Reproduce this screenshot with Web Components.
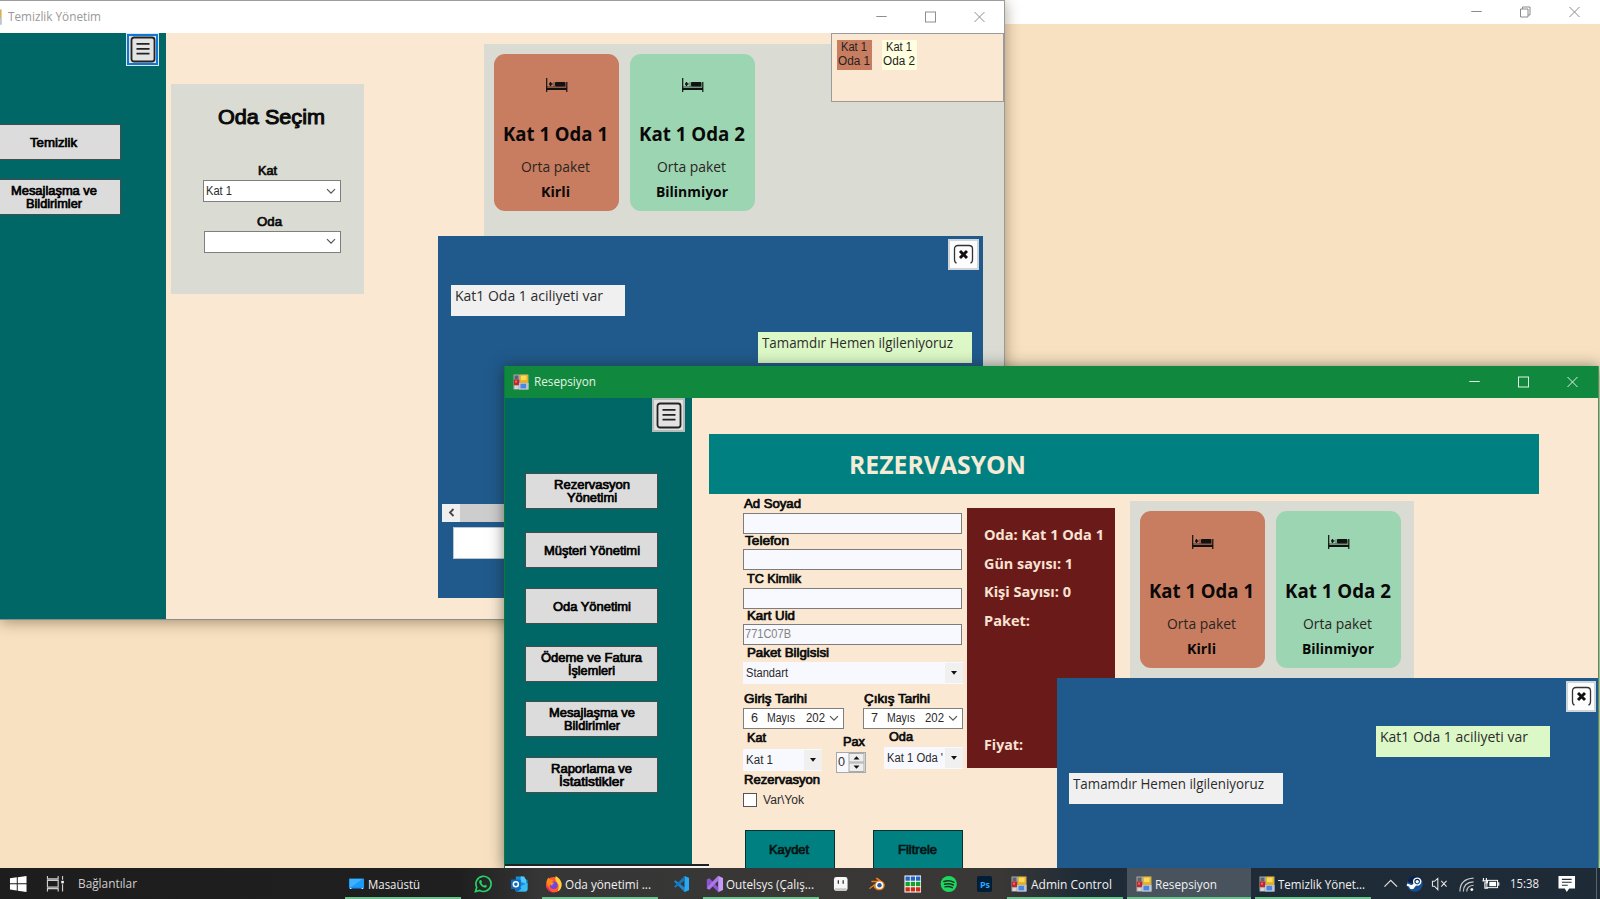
<!DOCTYPE html>
<html lang="tr">
<head>
<meta charset="utf-8">
<title>Otel Yönetimi</title>
<style>
html,body{margin:0;width:1600px;height:899px;overflow:hidden;background:#f7e1c1}
</style>
</head>
<body>
<hotel-desktop></hotel-desktop>
<script>
const define = (name, render, after) => customElements.define(name, class extends HTMLElement {
  connectedCallback() {
    if (this.shadowRoot) return;
    const root = this.attachShadow({ mode: 'open' });
    root.innerHTML = '<style>*{box-sizing:border-box}:host{display:block;box-sizing:border-box}</style>' + render(this);
    if (after) after(this, root);
  }
});
const attr = (el, n, d) => el.getAttribute(n) ?? d;

/* Single line label squeezed or stretched to a given width. f: ms | sg */
define('fit-text', el => `<style>
:host{display:inline-block;white-space:nowrap;line-height:1;flex:none;width:${attr(el,'w')}px;height:${attr(el,'s',12)}px;font-size:${attr(el,'s',12)}px;
font-family:${attr(el,'f','ms')==='ms' ? '"Liberation Sans",Arial,sans-serif' : '"Open Sans","Noto Sans",sans-serif'};font-weight:${attr(el,'wt',400)}}
span{display:inline-block;transform-origin:0 50%;line-height:1;vertical-align:top;-webkit-text-stroke:${attr(el,'k',0)}px currentColor}
</style><span><slot></slot></span>`, (el, root) => {
  const s = root.querySelector('span');
  const w = s.getBoundingClientRect().width;
  if (w) s.style.transform = `scaleX(${(+attr(el,'w')) / w})`;
});

define('win-icon', () => `<style>:host{width:16px;height:16px;flex:none}svg{display:block}</style>
<svg width="16" height="16" viewBox="0 0 16 16"><rect x=".5" y=".5" width="15" height="15" fill="#a9aba4"/><rect x="1.500" y="1.500" width="4" height="4" fill="#5b6470"/><rect x=".8" y="5.500" width="5.500" height="5.500" fill="#c3272d"/><rect x="2" y="6.600" width="2" height="2" fill="#ee6a60"/><rect x="6" y="9" width="9.500" height="6.500" fill="#b9c5d8"/><rect x="7.500" y="9.800" width="5.600" height="4.500" fill="#4d86e0"/><rect x="1.500" y="12" width="4" height="3" fill="#d3d4d6"/><rect x="7" y=".8" width="8" height="8" fill="#e8b11e"/><rect x="8" y="1.600" width="5.500" height="4.500" fill="#fbd95a"/></svg>`);

/* Caption buttons */
define('caption-buttons', el => { const g = attr(el,'gap',49); return `<style>:host{display:flex;align-items:center;color:inherit}
svg{display:block;width:${g}px;height:14px;flex:none}path,rect{fill:none;stroke:currentColor;stroke-width:1}</style>
<svg viewBox="${-g/2} -7 ${g} 14"><path d="M-5.200 -.5H5.200"/></svg>
<svg viewBox="${-g/2} -7 ${g} 14">${el.hasAttribute('restore') ? '<path d="M-5 -3H2.500V5H-5ZM-3 -3V-5H4.500V3H2.500"/>' : '<rect x="-5" y="-5" width="10" height="10"/>'}</svg>
<svg viewBox="${-g/2} -7 ${g} 14"><path d="M-5 -5L5 5M5 -5L-5 5"/></svg>`; });

define('menu-button', el => `<style>:host{width:33px;height:${attr(el,'h',33)}px;padding:${el.hasAttribute('focus')?'1px':'0'};background:#dce9f0;flex:none}
div{width:100%;height:100%;display:flex;align-items:center;justify-content:center;background:#e1e1e1;border:2px solid ${el.hasAttribute('focus')?'#0f78d4':'#b5bdb8'}}</style>
<div><svg width="26" height="27" viewBox="0 0 26 27"><rect x="1.500" y="1.500" width="23" height="24" rx="2.500" fill="#e3e3e3" stroke="#222" stroke-width="1.800"/><path d="M6.500 7.800H19.500M6.500 12.800H19.500M6.500 17.600H19.500" stroke="#222" stroke-width="1.700"/></svg></div>`);

define('nav-button', () => `<style>:host{display:flex;flex-direction:column;align-items:center;justify-content:center;gap:1px;height:36px;background:#dcdcdc;border:1px solid #444c4c;flex:none;padding:1px 0 0 0}::slotted(:only-child){margin-top:2px}</style><slot></slot>`);

define('combo-box', el => { const flat = el.hasAttribute('flat'); return `<style>:host{display:flex;align-items:center;justify-content:space-between;height:22px;flex:none;background:${flat?'#f8f8ff':'#fff'};border:${flat?'0':'1px solid #7f7f7f'};color:#2a2a2a;width:${attr(el,'w')}px;padding-left:${flat?3:2}px;overflow:hidden}
.b{width:18px;height:20px;flex:none;display:flex;align-items:center;justify-content:center;background:${flat?'#f0f0f0':'transparent'}}
.t{display:flex;align-items:center}</style>
<div class="t"><slot></slot></div><div class="b">${flat
 ? '<svg width="6" height="4"><path d="M0 0H6L3 3.800Z" fill="#111"/></svg>'
 : '<svg width="10" height="7"><path d="M1 1.200L5 5.200L9 1.200" fill="none" stroke="#555" stroke-width="1.200"/></svg>'}</div>`; });

define('text-field', () => `<style>:host{display:flex;align-items:center;height:21px;background:#f8f8ff;border:1px solid #7d7b7b;color:#828282;padding:0 0 1px 1px;flex:none}</style><slot></slot>`);

define('room-card', el => `<style>:host{width:125px;height:157px;border-radius:11px;background:${attr(el,'tone')};color:#0a0808;display:flex;flex-direction:column;align-items:center;flex:none;padding:24px 2px 0 0}
svg{display:block;margin:0 0 31px 2px}.p{color:#2b2420;margin:16px 0 11px}div{display:flex}</style>
<svg width="23" height="15" viewBox="0 0 23 15"><path d="M1.700 0V14M21.800 4V14" stroke="#111" stroke-width="1.200"/><path d="M1.500 9.800H22V12H1.500Z" fill="#111"/><rect x="10" y="4" width="10.500" height="4.500" rx="1" fill="#111"/><path d="M9 4V8.800M21 8.800H1.500" stroke="#111" stroke-width=".5"/><path d="M5.500 4V8M4 6H7.500" stroke="#111" stroke-width="1.400"/></svg>
<fit-text f="sg" s="19.500" wt="700" w="${attr(el,'nw',105)}">${attr(el,'name')}</fit-text>
<div class="p"><fit-text f="sg" s="14.500" w="69">Orta paket</fit-text></div>
<fit-text f="sg" s="14.500" wt="700" w="${attr(el,'sw')}">${attr(el,'state')}</fit-text>`);

define('room-list', el => `<style>:host{display:flex;gap:11px;padding:10px;background:#dadbd3}</style>
<room-card tone="#c87d60" name="Kat 1 Oda 1" state="Kirli" sw="29"></room-card>
<room-card tone="#9cd5b2" name="Kat 1 Oda 2" nw="106" state="Bilinmiyor" sw="72"></room-card>`);

define('chat-bubble', el => `<style>:host{height:31px;width:${attr(el,'bw')}px;padding:2px 0 0 4px;background:${el.hasAttribute('own')?'#dcf8c6':'#f0f0f0'};color:#2c2c2c;align-self:${el.hasAttribute('own')?'flex-end':'flex-start'}}</style>
<fit-text f="sg" s="14" w="${attr(el,'w')}"><slot></slot></fit-text>`);

define('chat-close', el => `<style>:host{width:${attr(el,'w',31)}px;height:31px;background:#fdfdfd;border:2px solid #cfd6da;align-self:flex-end;flex:none;display:flex;align-items:center;justify-content:center}svg{display:block}</style>
<svg width="21" height="21" viewBox="0 0 21 21"><path d="M3.500 19Q1.500 18.500 1.500 15.500V5Q1.500 1.500 5 1.500H16Q19.500 1.500 19.500 5V15.500Q19.500 18.500 17.500 19" fill="none" stroke="#333" stroke-width="1.300"/><path d="M7 7L14 14M14 7L7 14" stroke="#111" stroke-width="2.900"/></svg>`);

define('chat-panel', () => `<style>:host{display:flex;flex-direction:column;background:#205a8c;overflow:hidden}</style><slot></slot>`);

define('cleaning-window', () => `<style>
:host{width:1005px;height:620px;display:flex;flex-direction:column;overflow:hidden;background:#fae8d3;border-top:1px solid #9d9d9d;border-right:1px solid #9a9a9a;border-bottom:1px solid #8d8d8d}
header{height:32px;flex:none;display:flex;align-items:center;background:#fff;color:#999}
header win-icon{margin-left:-14px;margin-right:6px}header caption-buttons{margin-left:auto;color:#8f8f8f}
main{flex:1;display:flex;min-height:0}
nav{width:166px;background:#006666;display:flex;flex-direction:column;flex:none}
nav menu-button{align-self:flex-end;margin-right:7px}nav nav-button{width:135px;margin-left:-14px}
.pick{width:193px;height:210px;margin:51px 0 0 5px;background:#dadbd3;display:flex;flex-direction:column;align-items:center;flex:none;color:#0a0a0a}
.rooms{width:520px;margin:11px 0 0 120px;flex:none}.rooms room-list{height:540px}
aside{position:absolute;left:831px;top:32px;width:173px;height:69px;border:1px solid #9b9b9b;background:#fae8d3;padding:6px 5px;display:flex;gap:10px;color:#222}
aside div{width:35px;height:30px;display:flex;flex-direction:column;align-items:center;justify-content:center;gap:2px;padding:0 1px 2px 0}
chat-panel{position:absolute;left:438px;top:235px;width:545px;height:362px;padding:3px 4px 0 4px}
.feed{display:flex;flex-direction:column;padding:14.500px 7.500px 0 8.500px;gap:16px}
.scroll{display:flex;height:18px;background:#cdcdcd;margin-top:141px;flex:none}
.scroll i{width:18px;background:#f0f0f0;display:flex;align-items:center;justify-content:center}
.entry{height:32px;background:#fff;border:1px solid #bcc6d0;margin:5px 0 0 11px;flex:none}
</style>
<header><win-icon></win-icon><fit-text f="sg" s="12.500" w="93">Temizlik Yönetim</fit-text><caption-buttons gap="49"></caption-buttons></header>
<main><nav><menu-button focus></menu-button>
<nav-button style="margin-top:58px"><fit-text s="12.500" k=".7" w="47">Temizlik</fit-text></nav-button>
<nav-button style="margin-top:19px"><fit-text s="12.500" k=".7" w="86">Mesajlaşma ve</fit-text><fit-text s="12.500" k=".7" w="56">Bildirimler</fit-text></nav-button></nav>
<section class="pick"><fit-text s="20.500" k="1" w="107" style="margin:23px 0 0 8px">Oda Seçim</fit-text>
<fit-text s="12.500" k=".7" w="19" style="margin:37px 0 3px">Kat</fit-text><combo-box w="138" style="margin-left:9px"><fit-text s="12.500" w="26">Kat 1</fit-text></combo-box>
<fit-text s="12.500" k=".7" w="25" style="margin:14px 0 2px 4px">Oda</fit-text><combo-box w="137" style="margin-left:10px"></combo-box></section>
<section class="rooms"><room-list></room-list></section></main>
<aside><div style="background:#c87d60"><fit-text s="12" w="26">Kat 1</fit-text><fit-text s="12" w="32">Oda 1</fit-text></div><div style="background:#ffffe0"><fit-text s="12" w="26">Kat 1</fit-text><fit-text s="12" w="32">Oda 2</fit-text></div></aside>
<chat-panel><chat-close></chat-close><div class="feed"><chat-bubble bw="174" w="148">Kat1 Oda 1 aciliyeti var</chat-bubble><chat-bubble own bw="214" w="191">Tamamdır Hemen ilgileniyoruz</chat-bubble></div>
<div class="scroll"><i><svg width="7" height="9"><path d="M5.500 1L2 4.500L5.500 8" fill="none" stroke="#444" stroke-width="1.800"/></svg></i></div><div class="entry"></div></chat-panel>`);

define('booking-form', () => `<style>
:host{width:220px;color:#0a0a0a;display:flex;flex-direction:column;flex:none}
.l{display:flex;align-items:center;flex:none}.r{display:flex;justify-content:space-between;flex:none}
.spin{width:30px;height:21px;border:1px solid #a9a9a9;background:#f8f8ff;display:flex;align-items:center;justify-content:space-between;padding-left:1px;color:#333}
.spin svg{display:block}
button{width:90px;height:50px;background:#008080;border:1px solid #0b2e2e;color:#041414;padding:13px 3px 0 0;display:flex;justify-content:center;align-items:flex-start;font:inherit}
.chk{width:14px;height:14px;border:1px solid #555;background:#fff;margin-right:6px}
</style>
<div class="l" style="height:19px;padding:1px 0 0 1px"><fit-text s="12.500" k=".7" w="57">Ad Soyad</fit-text></div><text-field style="width:219px"></text-field>
<div class="l" style="height:15px;padding-left:2px"><fit-text s="12.500" k=".7" w="44">Telefon</fit-text></div><text-field style="width:219px"></text-field>
<div class="l" style="height:18px;padding:0 0 0 4px"><fit-text s="12.500" k=".7" w="54">TC Kimlik</fit-text></div><text-field style="width:219px"></text-field>
<div class="l" style="height:15px;padding:0 0 1px 4px"><fit-text s="12.500" k=".7" w="48">Kart Uid</fit-text></div><text-field style="width:219px"><fit-text s="12.500" w="46">771C07B</fit-text></text-field>
<div class="l" style="height:17px;padding:0 0 1px 4px"><fit-text s="12.500" k=".7" w="82">Paket Bilgisisi</fit-text></div><combo-box flat w="220"><fit-text s="12.500" w="42">Standart</fit-text></combo-box>
<div class="r" style="height:18px;margin-top:6px;align-items:center;padding:1px 33px 0 1px"><fit-text s="12.500" k=".7" w="63">Giriş Tarihi</fit-text><fit-text s="12.500" k=".7" w="66">Çıkış Tarihi</fit-text></div>
<div class="r"><combo-box w="101" style="height:21px"><fit-text s="12.500" w="7" style="margin-left:5px">6</fit-text><fit-text s="12.500" w="28" style="margin-left:9px">Mayıs</fit-text><fit-text s="12.500" w="19" style="margin-left:11px">202</fit-text></combo-box>
<combo-box w="100" style="height:21px"><fit-text s="12.500" w="7" style="margin-left:5px">7</fit-text><fit-text s="12.500" w="28" style="margin-left:9px">Mayıs</fit-text><fit-text s="12.500" w="19" style="margin-left:10px">202</fit-text></combo-box></div>
<div class="r" style="height:44px;align-items:flex-start"><div><div class="l" style="height:20px;padding:0 0 1px 4px"><fit-text s="12.500" k=".7" w="19">Kat</fit-text></div><combo-box flat w="79"><fit-text s="12.500" w="27">Kat 1</fit-text></combo-box></div>
<div style="margin-left:-4px"><div class="l" style="height:23px;padding:4px 0 0 7px"><fit-text s="12.500" k=".7" w="22">Pax</fit-text></div><div class="spin"><fit-text s="12.500" w="7">0</fit-text><svg width="17" height="19" viewBox="0 0 17 19"><rect x="1" y=".5" width="15" height="8.500" fill="#eee" stroke="#aaa"/><rect x="1" y="10" width="15" height="8.500" fill="#eee" stroke="#aaa"/><path d="M5.500 6.500H11.500L8.500 3.200ZM5.500 12.500H11.500L8.500 15.800Z" fill="#111"/></svg></div></div>
<div><div class="l" style="height:18px;padding:0 0 2px 5px"><fit-text s="12.500" k=".7" w="24">Oda</fit-text></div><combo-box flat w="79"><fit-text s="12.500" w="56">Kat 1 Oda '</fit-text></combo-box></div></div>
<div class="l" style="height:13px;padding:1px 0 0 1px"><fit-text s="12.500" k=".7" w="76">Rezervasyon</fit-text></div>
<div class="l" style="height:14px;margin-top:7px;color:#2a2a2a"><div class="chk"></div><fit-text s="12.500" w="41" style="margin-top:1px">Var\\Yok</fit-text></div>
<div class="r" style="margin:23px 0 0 2px"><button><fit-text s="12.500" k=".7" w="40">Kaydet</fit-text></button><button><fit-text s="12.500" k=".7" w="39">Filtrele</fit-text></button></div>`);

define('reception-window', () => `<style>
:host{width:1095px;height:502px;display:flex;flex-direction:column;overflow:hidden;background:#fae8d3;border-left:1px solid #0d7a3a;border-right:1px solid #3f9a5e}
header{height:32px;flex:none;display:flex;align-items:center;background:#10893e;color:#e2f3e4;padding:0 0 0 8px}
header win-icon{margin-right:5px}header caption-buttons{margin-left:auto;margin-right:1px}
main{flex:1;display:flex;min-height:0}
nav{width:187px;background:#006666;display:flex;flex-direction:column;flex:none}
menu-button{align-self:flex-end;margin-right:7px;margin-bottom:41px}nav-button{width:133px;margin-left:20px}
.strip{position:absolute;left:0;bottom:0;width:204px;height:4px;background:#f4f4f4;border-top:2px solid #222}
.page{flex:1;padding:36px 0 0 17px;min-width:0}
.banner{width:830px;height:60px;background:#008080;display:flex;align-items:center;padding:3px 0 0 140px;color:#f5ebd7}
.body{display:flex;padding-left:34px;align-items:flex-start}
.bill{width:148px;height:260px;margin:14px 0 0 4px;background:#6b1a1a;color:#f8e3d2;padding:20px 0 0 17px;display:flex;flex-direction:column;flex:none}
.bill fit-text{margin-bottom:14px}
room-list{width:284px;height:200px;margin:7px 0 0 15px;flex:none}
chat-panel{position:absolute;left:552px;top:312px;width:541px;height:190px;padding:3px 2px 0 12px}
.feed{display:flex;flex-direction:column;gap:16px;padding:14px 46px 0 0}
</style>
<header><win-icon></win-icon><fit-text f="sg" s="12.500" w="62">Resepsiyon</fit-text><caption-buttons gap="49"></caption-buttons></header>
<main><nav><menu-button h="34"></menu-button>
<nav-button><fit-text s="12.500" k=".7" w="76">Rezervasyon</fit-text><fit-text s="12.500" k=".7" w="50">Yönetimi</fit-text></nav-button>
<nav-button style="margin-top:23px"><fit-text s="12.500" k=".7" w="96">Müşteri Yönetimi</fit-text></nav-button>
<nav-button style="margin-top:20px"><fit-text s="12.500" k=".7" w="78">Oda Yönetimi</fit-text></nav-button>
<nav-button style="margin-top:22px"><fit-text s="12.500" k=".7" w="101">Ödeme ve Fatura</fit-text><fit-text s="12.500" k=".7" w="47">İşlemleri</fit-text></nav-button>
<nav-button style="margin-top:19px"><fit-text s="12.500" k=".7" w="86">Mesajlaşma ve</fit-text><fit-text s="12.500" k=".7" w="56">Bildirimler</fit-text></nav-button>
<nav-button style="margin-top:20px"><fit-text s="12.500" k=".7" w="81">Raporlama ve</fit-text><fit-text s="12.500" k=".7" w="65">İstatistikler</fit-text></nav-button></nav>
<div class="page"><div class="banner"><fit-text f="sg" s="24.500" wt="700" w="177">REZERVASYON</fit-text></div>
<div class="body"><booking-form></booking-form>
<div class="bill"><fit-text f="sg" s="14.500" wt="700" w="120">Oda: Kat 1 Oda 1</fit-text><fit-text f="sg" s="14.500" wt="700" w="89">Gün sayısı: 1</fit-text><fit-text f="sg" s="14.500" wt="700" w="87">Kişi Sayısı: 0</fit-text><fit-text f="sg" s="14.500" wt="700" w="46">Paket:</fit-text><fit-text f="sg" s="14.500" wt="700" w="39" style="margin-top:96px">Fiyat:</fit-text></div>
<room-list></room-list></div></div></main>
<div class="strip"></div>
<chat-panel><chat-close w="30"></chat-close><div class="feed"><chat-bubble own bw="174" w="148">Kat1 Oda 1 aciliyeti var</chat-bubble><chat-bubble bw="214" w="191">Tamamdır Hemen ilgileniyoruz</chat-bubble></div></chat-panel>`);

const ICONS = {
  start: '<path d="M1 3.400L8 2.400V8.500H1ZM9 2.200L18 1V8.500H9ZM1 9.500H8V15.900L1 14.900ZM9 9.500H18V17.500L9 16.200Z" fill="#fff"/>',
  task: '<path d="M1.500 1V4H12.500V1M1.500 17V14H12.500V17M1.500 5.500H12.500V12.500H1.500ZM17 1V5M17 9.500V17" fill="none" stroke="#ccc" stroke-width="1.200"/><rect x="15.700" y="6" width="2.600" height="2.600" fill="#fff"/>',
  desk: '<rect x="1" y="3.500" width="15.500" height="11" rx=".5" fill="#1b9af7"/><path d="M2 13L15 4H2Z" fill="#3db1ff"/><path d="M1 13.800H16.500" stroke="#0c5aa8" stroke-width="1.200"/><path d="M2 13.800H3.500M14 13.800H15.500" stroke="#fff"/>',
  wa: '<path d="M1.500 17L2.800 12.600A7.800 7.800 0 1 1 5.800 15.800Z" fill="none" stroke="#25d366" stroke-width="1.700"/><path d="M6 5.500Q7.200 4.500 7.800 6L8.200 7.200L7.500 8.300Q8.500 10.200 10.300 11L11.300 10L13.300 11Q13.200 13 11.300 13Q6.500 12.200 5.300 7.500Q5.200 6.200 6 5.500Z" fill="#25d366"/>',
  outlook: '<path d="M6 1.500H14L16 5H18V15L16.500 17H6Z" fill="#1490df"/><path d="M11 1.500H14.500L16.500 5V9L11 7Z" fill="#50c8f4"/><path d="M5 15L18 8V15Q18 17 16 17H7Z" fill="#39bdf0"/><path d="M5 12L12 14L8 17H6Z" fill="#1668bd"/><rect x="1" y="4.500" width="10" height="10" rx="1" fill="#0f6cbd"/><circle cx="6" cy="9.500" r="2.600" fill="none" stroke="#fff" stroke-width="1.500"/>',
  fox: '<circle cx="9" cy="10" r="8" fill="#ff5a2c"/><path d="M1.500 7Q2 4 4 2.500Q4.300 4 6 4.500Q8 5 9 7L4 12Z" fill="#ff8a1c"/><path d="M11 1Q17.500 4.500 17 11Q16.500 15 13 17Q15.500 11 12.500 8Q10 5 11 1Z" fill="#ffd33c"/><path d="M1.500 12Q4 18 10 18Q6 17.500 3.500 13Z" fill="#e31587"/><circle cx="9" cy="10.500" r="3.900" fill="#7542e5"/><path d="M4.500 7.500Q7 6.500 9.500 8.500Q7 9 7.500 11Q5 10.500 4.500 7.500Z" fill="#ff980e"/>',
  code: '<path d="M13 1L17.500 3V15.500L13 17.500L2 6.800L3.600 5.300L13 12.800Z" fill="#1e86d0"/><path d="M13 17.500L17.500 15.500V3L13 1Z" fill="#2aa8f2"/><path d="M13 1L2 11.700L3.600 13.200L13 5.700Z" fill="#1576ba"/>',
  vs: '<path d="M12.500 .8L17.500 3V15.500L12.500 17.700Z" fill="#c49af5"/><path d="M.8 4.500L3.500 3.300L12.500 12.500V17.500L3.500 8.500V12L.8 14Z" fill="#8d55d6"/><path d="M12.500 .8L3 10.500L.8 14L3.500 15.200L12.500 6Z" fill="#ac75ea"/>',
  ase: '<rect x="2" y="2" width="14" height="14.500" rx="2.500" fill="#f7f7f7"/><path d="M3 13.500H15V15Q15 16.500 13.500 16.500H4.500Q3 16.500 3 15Z" fill="#c7c7c7"/><path d="M6.500 5.500V9M11.500 5.500V9" stroke="#333" stroke-width="1.300"/>',
  blender: '<path d="M1 13.500L9 7.500H3.500V5.800H10.500L7.800 3.600L9.200 2.500L16 7.500Q18.500 10.500 16 13.800Q12.500 17 8.300 14.800Q6 13.300 5.800 11.500L2 14.500Z" fill="#ea7f1e"/><circle cx="11.800" cy="10.600" r="3.900" fill="#fff"/><circle cx="11.800" cy="10.600" r="2.300" fill="#235b9e"/>',
  grid: '<rect x=".5" y=".5" width="17" height="17.500" fill="#fff"/><g><path d="M1.500 1.500h4.500v4.500h-4.500zM6.900 1.500h4.500v4.500h-4.500zM12.300 1.500h4.500v4.500h-4.500z" fill="#2464c4"/><path d="M1.500 7h4.500v4.500h-4.500zM6.900 7h4.500v4.500h-4.500zM12.300 7h4.500v4.500h-4.500z" fill="#15a02b"/><path d="M1.500 12.500h4.500v4.500h-4.500zM6.900 12.500h4.500v4.500h-4.500zM12.300 12.500h4.500v4.500h-4.500z" fill="#cf2a14"/></g>',
  spot: '<circle cx="9" cy="9.200" r="8.300" fill="#1ed760"/><path d="M4 6.700Q9.500 5 14.500 7.500M4.700 9.500Q9.500 8.200 13.700 10.300M5.200 12.200Q9.300 11.200 12.700 13" fill="none" stroke="#1b3323" stroke-width="1.500" stroke-linecap="round"/>',
  steam: '<circle cx="9" cy="9" r="8.200" fill="#17508f"/><path d="M1.200 7Q3 1 9 .8Q14 1 16.500 5L8 9Z" fill="#0c2148"/><circle cx="11.500" cy="6.800" r="3.600" fill="none" stroke="#fff" stroke-width="1.500"/><path d="M1 9.800L6 12L9 9.500M9.500 10L6.500 13.500" fill="none" stroke="#fff" stroke-width="2.400"/><circle cx="5.800" cy="12.500" r="2.200" fill="#fff"/><circle cx="11.500" cy="6.800" r="1.700" fill="#fff"/>',
  up: '<path d="M2.500 12L9 5.500L15.500 12" fill="none" stroke="#ddd" stroke-width="1.300"/>',
  mute: '<path d="M1.500 6.500V11.500H3.500L7 15V3.500L3.500 6.500ZM10.500 6L16 12M16 6L10.500 12" fill="none" stroke="#e4e4e4" stroke-width="1.100"/>',
  wifi: '<path d="M2 17Q2 4 16 3.200M5.500 17Q5.500 7.500 16 7M9 17Q9 11 16 10.500" fill="none" stroke="#c8ccd0" stroke-width="1.200"/><circle cx="14.200" cy="15" r="1.500" fill="#fff"/>',
  batt: '<rect x="5" y="5.500" width="11" height="7.500" fill="none" stroke="#fff"/><rect x="7.500" y="7" width="7" height="4.500" fill="#fff"/><path d="M17.200 7.500V11M1.500 3V6M4.500 3V6M.5 6H5.500V8H3V13.500H6" fill="none" stroke="#fff" stroke-width="1.200"/>',
  note: '<path d="M.5 1H17.500V14H11.500L9 17.500L7 14H.5Z" fill="#fff"/><path d="M4 4.500H14M4 7.500H14M4 10.500H10" stroke="#222c38" stroke-width="1.100"/>'
};
define('tray-icon', el => `<style>:host{width:18px;height:18px;flex:none}svg{display:block}b{display:flex;width:15px;height:16px;margin:1px;border-radius:2px;background:#001e36;color:#31a8ff;align-items:center;justify-content:center}</style>${
 el.getAttribute('n') === 'ps' ? '<b><fit-text f="sg" s="9" wt="700" w="10">Ps</fit-text></b>' : `<svg width="18" height="18" viewBox="0 0 18.500 18.500">${ICONS[el.getAttribute('n')]}</svg>`}`);

define('task-item', el => `<style>:host{display:flex;align-items:center;height:31px;width:${attr(el,'bw')}px;padding:2px 0 0 ${attr(el,'pl',3)}px;flex:none;gap:4px;color:#f0f0f0;border-bottom:2px solid #6cc28c;background:${el.hasAttribute('active')?'#48535d':'transparent'}}::slotted(fit-text){margin-top:1px}</style><slot></slot>`);

define('task-bar', () => {
  const ic = n => `<tray-icon n="${n}"></tray-icon>`;
  /* [left edge, width, content] */
  const items = [
    [9, 18, ic('start')], [46, 18, ic('task')], [78, 60, '<fit-text f="sg" s="13.500" w="59" style="color:#cfcfcf;margin-top:1px">Bağlantılar</fit-text>'],
    [345, 116, `<task-item bw="116">${ic('desk')}<fit-text f="sg" s="13" w="52" style="margin-left:-2px">Masaüstü</fit-text></task-item>`],
    [474, 18, ic('wa')], [510, 18, ic('outlook')],
    [542, 116, `<task-item bw="116">${ic('fox')}<fit-text f="sg" s="13" w="86" style="margin-left:-2px">Oda yönetimi ...</fit-text></task-item>`],
    [672, 18, ic('code')],
    [703, 116, `<task-item bw="116">${ic('vs')}<fit-text f="sg" s="13" w="88" style="margin-left:-2px">Outelsys (Çalış...</fit-text></task-item>`],
    [832, 18, ic('ase')], [868, 18, ic('blender')], [904, 18, ic('grid')], [940, 18, ic('spot')], [976, 18, ic('ps')],
    [1007, 116, '<task-item bw="116" pl="4"><win-icon></win-icon><fit-text f="sg" s="13" w="81">Admin Control</fit-text></task-item>'],
    [1127, 124, '<task-item active bw="124" pl="9"><win-icon></win-icon><fit-text f="sg" s="13" w="62" style="margin-left:-1px">Resepsiyon</fit-text></task-item>'],
    [1255, 116, '<task-item bw="116" pl="4"><win-icon></win-icon><fit-text f="sg" s="13" w="87" style="margin-left:-1px">Temizlik Yönet...</fit-text></task-item>'],
    [1382, 18, ic('up')], [1406, 18, ic('steam')], [1431, 18, ic('mute')], [1458, 18, ic('wifi')], [1482, 18, ic('batt')],
    [1510, 29, '<fit-text f="sg" s="12.500" w="29" style="margin-top:2px">15:38</fit-text>'], [1558, 18, ic('note')], [1596, 1, '<i></i>']
  ];
  let end = 0;
  const html = items.map(([x, w, h]) => { const g = x - end; end = x + w; return `<div style="width:${w}px;margin-left:${g}px">${h}</div>`; }).join('');
  return `<style>:host{height:31px;width:1600px;display:flex;align-items:center;color:#eee;overflow:hidden;background:linear-gradient(90deg,#1d1d1d 0,#1f1f1f 460px,#363636 540px,#3a3836 1000px,#1f2b37 1080px,#1e2a36 1600px)}
div{flex:none;display:flex;align-items:center}div>tray-icon{margin-top:1px}i{width:1px;height:31px;background:#5a646e}</style>${html}`;
});

define('hotel-desktop', () => `<style>
:host{width:1600px;height:899px;position:relative;overflow:hidden;background:#f7e1c1;display:flex;flex-direction:column}
.back{height:24px;background:#fff;display:flex;justify-content:flex-end;align-items:center;color:#8a8a8a;padding-right:1px;flex:none}
task-bar{margin-top:auto;position:relative;flex:none}
cleaning-window{position:absolute;left:0;top:0;box-shadow:0 2px 14px rgba(60,40,10,.45)}
reception-window{position:absolute;left:504px;top:366px;box-shadow:0 1px 14px rgba(20,30,20,.55)}
</style>
<div class="back"><caption-buttons gap="49" restore></caption-buttons></div>
<cleaning-window></cleaning-window><reception-window></reception-window><task-bar></task-bar>`);
</script>
</body>
</html>
